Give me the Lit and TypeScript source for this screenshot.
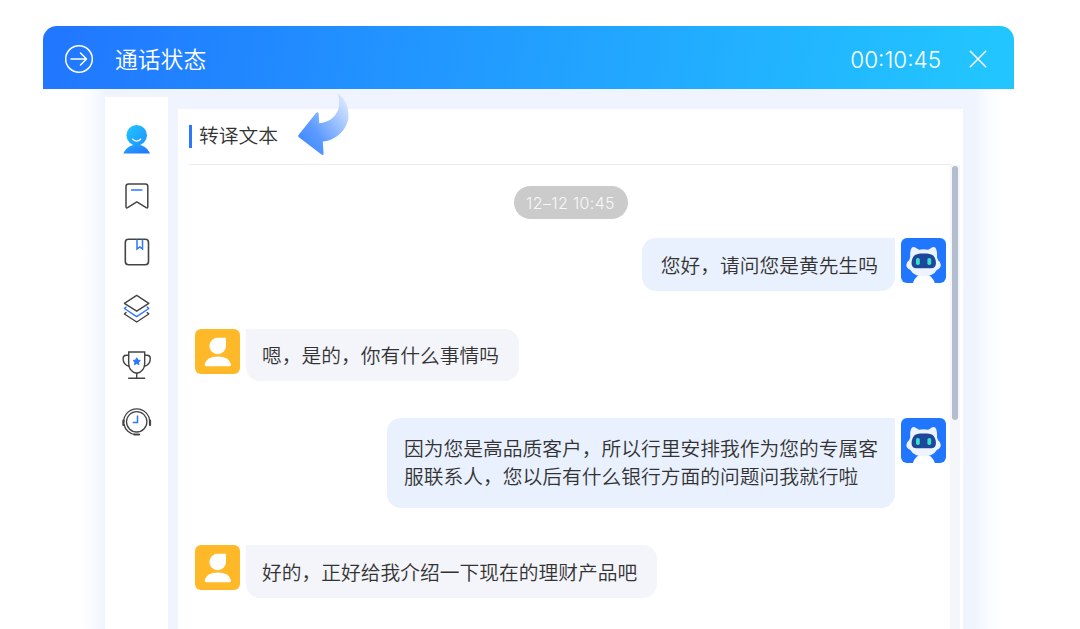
import { LitElement, html, svg, css, nothing, type TemplateResult } from "lit";
import { customElement, property } from "lit/decorators.js";

interface Message {
  from: "bot" | "customer";
  lines: string[];
}

const MESSAGES: Message[] = [
  { from: "bot", lines: ["您好，请问您是黄先生吗"] },
  { from: "customer", lines: ["嗯，是的，你有什么事情吗"] },
  {
    from: "bot",
    lines: [
      "因为您是高品质客户，所以行里安排我作为您的专属客",
      "服联系人，您以后有什么银行方面的问题问我就行啦",
    ],
  },
  { from: "customer", lines: ["好的，正好给我介绍一下现在的理财产品吧"] },
];

const INK = "#444";
const BLUE = "#2b78ff";

// Sidebar glyphs, each on a 32x32 grid.
const NAV_ICONS: TemplateResult[] = [
  svg`
    <defs>
      <linearGradient id="head" x1="0" y1="0" x2="1" y2="1">
        <stop offset="0" stop-color="#20c8ff" />
        <stop offset="1" stop-color="#2190ff" />
      </linearGradient>
      <linearGradient id="body" x1="0" y1="0" x2="1" y2="1">
        <stop offset="0" stop-color="#22b0ff" />
        <stop offset="1" stop-color="#2270ff" />
      </linearGradient>
    </defs>
    <path d="M2.3 30.4C5 25 9.5 21.4 15.7 21.4S26.4 25 29 30.4Z" fill="url(#body)" />
    <circle cx="15.7" cy="12.3" r="10.3" fill="url(#head)" />
    <path d="M11.8 16.2Q15.7 20 19.6 16.2" fill="none" stroke="#fff"
      stroke-width="1.3" stroke-linecap="round" />`,
  svg`
    <path d="M7.5 4H24.5Q26.8 4 26.8 6.3V26.8Q26.8 28.6 25.2 27.7L15.8 21.9L6.6 27.7Q5 28.6 5 26.8V6.3Q5 4 7.5 4Z"
      fill="none" stroke=${INK} stroke-width="1.5" stroke-linejoin="round" />
    <path d="M10.5 9.9H20.8" stroke=${BLUE} stroke-width="1.5" stroke-linecap="round" />`,
  svg`
    <rect x="4.3" y="3.3" width="23.2" height="25.5" rx="3.2" fill="none"
      stroke=${INK} stroke-width="1.6" />
    <path d="M16 3.6V13L18.8 10.9L21.5 13V3.6" fill="none" stroke=${BLUE} stroke-width="1.5" />`,
  svg`
    <g fill="none" stroke-width="1.4" stroke-linejoin="round" stroke-linecap="round">
      <path d="M15.7 2.4L27.8 10.3L15.7 18.2L3.4 10.3Z" stroke=${INK} />
      <path d="M5 13.9L3.4 15.5L15.7 23.6L27.8 15.5L26.2 13.9" stroke=${BLUE} />
      <path d="M5 19.4L3.4 21L15.7 29L27.8 21L26.2 19.4" stroke=${INK} />
    </g>`,
  svg`
    <g fill="none" stroke=${INK} stroke-width="1.4" stroke-linecap="round">
      <path d="M7.7 3H23.7V14.5Q23.7 22.5 15.7 24.3Q7.7 22.5 7.7 14.5Z" />
      <path d="M7.7 6.3H5.2Q2.1 6.3 2.1 9.5Q2.2 15.8 8 17.3" />
      <path d="M23.7 6.3H26.2Q29.3 6.3 29.3 9.5Q29.2 15.8 23.4 17.3" />
      <path d="M15.7 24.3V29M7.7 29.2H23.7" />
    </g>
    <path d="M15.7 8.8L16.8 11.1L19.3 11.5L17.5 13.2L17.9 15.7L15.7 14.5L13.5 15.7L13.9 13.2L12.1 11.5L14.6 11.1Z"
      fill=${BLUE} stroke=${BLUE} stroke-width="1" stroke-linejoin="round" />`,
  svg`
    <g fill="none" stroke=${INK} stroke-width="1.3" stroke-linecap="round">
      <circle cx="15.7" cy="15.8" r="10.2" />
      <path d="M2.7 15.8A13 13 0 0 1 28.7 15.8" />
      <path d="M3 18.5A13 13 0 0 0 14 28.7" />
      <path d="M2.4 14.5V19M29 14.5V19M13.5 28.5H18" stroke-width="2.2" />
    </g>
    <path d="M16.5 9.5V16.6H11.7" fill="none" stroke=${BLUE} stroke-width="1.5" />`,
];

@customElement("chat-avatar")
export class ChatAvatar extends LitElement {
  @property() public kind: Message["from"] = "bot";

  static styles = css`
    :host {
      display: block;
      width: 45px;
      height: 45px;
      flex: none;
      border-radius: 6px;
      overflow: hidden;
      background: #2176ff;
    }
    :host([kind="customer"]) {
      background: #ffb827;
    }
    svg {
      display: block;
    }
  `;

  protected render(): TemplateResult {
    return html`<svg width="45" height="45" viewBox="0 0 45 45">
      ${this.kind === "bot" ? this._robot() : this._person()}
    </svg>`;
  }

  private _robot() {
    return svg`
      <path d="M11.7 45.5Q13 41.500 16 38.500Q17.500 37 20 37H25.500Q28 37 29.700 38.500Q32.800 41.500 34 45.500Z" fill="#fff" />
      <path d="M9.2 19.5Q8.8 12.5 10.8 9.8Q12.5 8 15.5 10.2L18 11.7Q22.5 10.6 27.2 11.7L29.7 10.2Q32.7 8 34.4 9.8Q36.4 12.5 36 19.5Q36.8 21.2 37 22.3Q39.8 24 39.8 27Q39.8 30.3 36 31.7Q32.2 38.3 22.6 38.3T9.2 31.7Q5.3 30.3 5.3 27Q5.3 24 8.2 22.3Q8.4 21.2 9.2 19.5Z"
        fill="#edf3ff" />
      <path d="M22.700 15.600C28 15.600 31.500 16 33.300 19C34.600 21.300 35 23.300 34.900 25.500C34.700 29 32.800 30.300 29.500 30.300H16C12.700 30.300 10.800 29 10.600 25.500C10.500 23.300 10.900 21.300 12.200 19C14 16 17.500 15.600 22.700 15.600Z"
        fill="#1d479b" />
      <rect x="15" y="20" width="3.8" height="7" rx="1.7" fill="#39e0c8" />
      <rect x="26.4" y="20" width="3.8" height="7" rx="1.7" fill="#39e0c8" />`;
  }

  private _person() {
    return svg`
      <path d="M22.7 8.7H31V17A8.3 8.3 0 1 1 22.7 8.7Z" fill="#fff" />
      <path d="M9.7 35.5Q11.5 27.5 22.8 27.5T36 35.5Q36.2 37.3 34.5 37.3H11.2Q9.5 37.3 9.7 35.5Z" fill="#fff" />`;
  }
}

@customElement("app-root")
export class AppRoot extends LitElement {
  static styles = css`
    :host {
      display: flex;
      flex-direction: column;
      box-sizing: border-box;
      height: 629px;
      padding: 26px 66px 0 42px;
      overflow: hidden;
      background: #fff;
      color: #333;
      font-family: "Noto Sans CJK SC", sans-serif;
      font-size: 19.75px;
      font-weight: 350;
    }
    svg {
      display: block;
      flex: none;
    }
    .header {
      display: flex;
      align-items: center;
      flex: none;
      box-sizing: border-box;
      height: 63px;
      margin-left: 0.5px;
      padding: 3px 26px 0 21.5px;
      border-radius: 14px 14px 0 0;
      background: linear-gradient(100deg, #2176ff, #22c5ff 97%);
      color: #fff;
    }
    .header-title {
      flex: 1;
      margin: 0 0 0 21px;
      font-size: 22.8px;
      line-height: 32px;
    }
    .timer {
      margin: 2px 27px 0 0;
      font: 300 22.5px/32px Inter, sans-serif;
    }
    .body {
      flex: 1;
      display: flex;
      gap: 10px;
      min-height: 0;
      margin: 0 10px 0 34px;
      padding: 0 41px 0 29px;
      background: linear-gradient(
        90deg,
        rgba(239, 244, 254, 0) 4px,
        rgba(239, 244, 254, 0.35) 16px,
        #eff4fe 29px,
        #eff4fe calc(100% - 29px),
        rgba(239, 244, 254, 0.35) calc(100% - 17px),
        rgba(239, 244, 254, 0)
      );
    }
    .nav {
      display: flex;
      flex-direction: column;
      gap: 24.6px;
      width: 47px;
      margin-top: 8px;
      padding: 26px 0 0 16px;
      background: #fff;
    }
    .main {
      position: relative;
      flex: 1;
      display: flex;
      flex-direction: column;
      min-width: 0;
      margin-top: 20px;
      background: #fff;
    }
    .title {
      display: flex;
      align-items: center;
      gap: 7px;
      height: 55px;
      margin: 0 12px 0 11px;
      border-bottom: 1px solid #ececf0;
    }
    .title-text {
      padding-bottom: 3px;
      line-height: 28px;
    }
    .title::before {
      content: "";
      width: 3px;
      height: 23px;
      background: #2b78ff;
    }
    .pointer {
      position: absolute;
      left: 119px;
      top: -17px;
    }
    .scroller {
      flex: 1;
      display: flex;
      gap: 4px;
      min-height: 0;
      padding: 0 3px 0 17px;
    }
    .messages {
      flex: 1;
      display: flex;
      flex-direction: column;
      gap: 37.3px;
      padding-top: 21px;
    }
    .time {
      align-self: center;
      box-sizing: border-box;
      width: 114px;
      height: 33px;
      margin-bottom: -18px;
      border-radius: 17px;
      background: #cbcbcb;
      color: #f8f8f8;
      text-align: center;
      letter-spacing: 0.35px;
      font: 300 16px/34px Inter, sans-serif;
    }
    .row {
      display: flex;
      align-items: flex-start;
      gap: 6px;
    }
    .row.bot {
      flex-direction: row-reverse;
    }
    .bubble {
      padding: 12.4px 20px 11.8px 16px;
      border-radius: 0 14px 14px 14px;
      background: #f4f5fa;
      line-height: 28px;
      white-space: nowrap;
    }
    .bot .bubble {
      padding: 12.8px 17px 12.2px 19px;
      border-radius: 14px 0 14px 14px;
      background: #e9f0fe;
    }
    .bot .bubble.multi {
      padding: 15.8px 17px 18.2px 17px;
    }
    .track {
      width: 10px;
      background: #f4f6fa;
    }
    .thumb {
      width: 6px;
      height: 254px;
      margin: 1px auto 0;
      border-radius: 3px;
      background: #b4bdce;
    }
  `;

  protected render(): TemplateResult {
    return html`
      <div class="header">
        <svg width="30" height="30" viewBox="0 0 30 30" fill="none" stroke="#fff" stroke-width="1.5">
          <circle cx="15" cy="15" r="13.3" />
          <path d="M7 15H22.5M16.5 9L22.5 15L16.5 21" stroke-linecap="round" stroke-linejoin="round" />
        </svg>
        <div class="header-title">通话状态</div>
        <div class="timer">00:10:45</div>
        <svg width="20" height="20" viewBox="0 0 20 20">
          <path d="M2.3 2.3L17.7 17.7M17.7 2.3L2.3 17.7" stroke="#fff"
            stroke-width="1.5" stroke-linecap="round" />
        </svg>
      </div>
      <div class="body">
        <div class="nav">
          ${NAV_ICONS.map(
            (icon) => html`<svg width="32" height="32" viewBox="0 0 32 32">${icon}</svg>`
          )}
        </div>
        <div class="main">
          <div class="title"><span class="title-text">转译文本</span></div>
          ${this._renderPointer()}
          <div class="scroller">
            <div class="messages">
              <div class="time">12–12 10:45</div>
              ${MESSAGES.map((m) => this._renderMessage(m))}
            </div>
            <div class="track"><div class="thumb"></div></div>
          </div>
        </div>
      </div>
    `;
  }

  private _renderMessage(m: Message): TemplateResult {
    return html`<div class="row ${m.from}">
      <chat-avatar kind=${m.from}></chat-avatar>
      <div class="bubble ${m.lines.length > 1 ? "multi" : ""}">
        ${m.lines.map((line, i) => html`${i > 0 ? html`<br />` : nothing}${line}`)}
      </div>
    </div>`;
  }

  private _renderPointer(): TemplateResult {
    return html`<svg class="pointer" width="54" height="65" viewBox="0 0 54 65">
      <defs>
        <linearGradient id="sweep" x1=".1" y1=".85" x2=".9" y2=".1">
          <stop offset="0" stop-color="#438aff" />
          <stop offset=".3" stop-color="#5c9aff" />
          <stop offset="1" stop-color="#d5e4ff" />
        </linearGradient>
      </defs>
      <path
        d="M1.5 43Q.7 44 1.6 44.9L24.5 62.6Q26.5 63.8 26.6 61.5L25.8 49.5C39 48.5 51.5 37 51.5 23.5C51.5 14 48 6.5 40.5 1.2C43.5 9 43 18 37 24.5C33.5 28.5 28.5 30.6 22.3 31.2L21.6 21.5Q21 19.5 19.3 20.8Z"
        fill="url(#sweep)" />
    </svg>`;
  }
}
